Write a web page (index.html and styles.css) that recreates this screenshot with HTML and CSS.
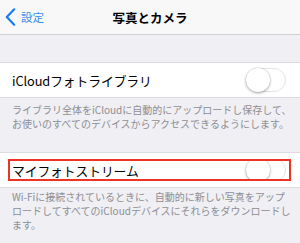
FILE: index.html
```html
<!DOCTYPE html>
<html lang="ja">
<head>
    <meta charset="UTF-8">
    <title>写真とカメラ</title>
    <link rel="stylesheet" href="styles.css">
</head>
<body>
    <div class="navbar">
        <div class="back">
            <svg class="chevron" width="11" height="18" viewBox="0 0 11 18">
                <path d="M9.2 1.3 L1.8 9 L9.2 16.7" fill="none" stroke="#1a7cf5" stroke-width="2.2" stroke-linecap="round" stroke-linejoin="round"/>
            </svg>
            <span>設定</span>
        </div>
        <div class="title">写真とカメラ</div>
    </div>

    <div class="group first">
        <div class="cell">
            <div class="row">
                <span class="label">iCloudフォトライブラリ</span>
                <span class="toggle"></span>
            </div>
        </div>
        <div class="footer">ライブラリ全体をiCloudに自動的にアップロードし保存して、お使いのすべてのデバイスからアクセスできるようにします。</div>
    </div>

    <div class="group">
        <div class="cell">
            <div class="row marked">
                <span class="label">マイフォトストリーム</span>
                <span class="toggle"></span>
            </div>
        </div>
        <div class="footer last">Wi-Fiに接続されているときに、自動的に新しい写真をアップロードしてすべてのiCloudデバイスにそれらをダウンロードし<br>ます。</div>
    </div>
</body>
</html>
```

FILE: styles.css
```css
body {
    margin: 0;
    background-color: #efeff4;
    font-family: "Noto Sans CJK JP", "Noto Sans", sans-serif;
    color: #000;
}
.navbar {
    height: 34px;
    background-color: #f8f8f9;
    border-bottom: 1px solid #cfcfd3;
    display: grid;
    grid-template-columns: 1fr auto 1fr;
    align-items: center;
}
.back {
    display: flex;
    align-items: center;
    gap: 5px;
    padding-left: 5px;
    color: #3c8fe8;
    font-size: 11.5px;
}
.chevron {
    display: block;
}
.title {
    font-size: 12.5px;
    font-weight: bold;
}
.group.first {
    padding-top: 27px;
}
.cell {
    background: #fff;
    border-top: 1px solid #dcdce0;
    border-bottom: 1px solid #dcdce0;
    height: 34px;
    display: flex;
    align-items: center;
}
.row {
    flex: 1;
    align-self: stretch;
    display: flex;
    align-items: center;
    justify-content: space-between;
    padding: 0 14px 0 12px;
}
.row.marked {
    align-self: center;
    height: 22px;
    box-sizing: border-box;
    margin: 0 9px 0 8px;
    border: 2px solid #ec3324;
    padding: 0 3px 0 2px;
    overflow: hidden;
}
.label {
    font-size: 12.8px;
    letter-spacing: -0.1px;
}
.toggle {
    position: relative;
    flex-shrink: 0;
    width: 40px;
    height: 24px;
    border: 1px solid #e3e3e8;
    border-radius: 13px;
    background: #fff;
    box-sizing: border-box;
}
.toggle::after {
    content: "";
    position: absolute;
    left: -1px;
    top: -1px;
    width: 24px;
    height: 24px;
    border-radius: 50%;
    background: #fff;
    box-shadow: 0 1px 3px rgba(0,0,0,0.35), 0 0 0 0.5px rgba(0,0,0,0.08);
}
.footer {
    padding: 5px 6px 21px 12px;
    font-size: 10px;
    line-height: 14px;
    color: #8e8e93;
}
.footer.last {
    padding-top: 2px;
    padding-bottom: 4px;
}
```
